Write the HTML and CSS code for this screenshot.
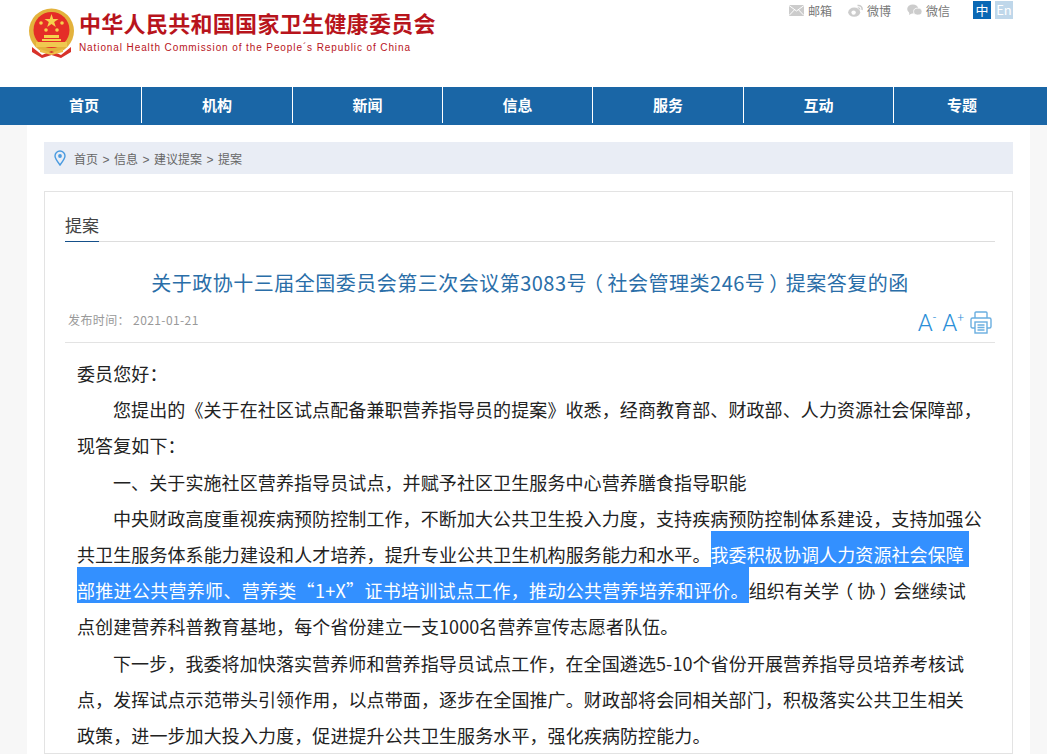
FILE: index.html
```html
<!DOCTYPE html>
<html lang="zh-CN">
<head>
  <title>关于政协十三届全国委员会第三次会议第3083号提案答复的函</title>
  <link rel="stylesheet" href="styles.css">
</head>
<body>
  <!-- Header -->
  <div class="header">
    <div class="logo">
      <svg class="emblem" width="47" height="50" viewBox="0 0 47 50">
        <circle cx="23.5" cy="23" r="22.5" fill="#e3b23c"/>
        <circle cx="23.5" cy="22" r="18" fill="#e52d27"/>
        <polygon points="23.5,6 25.2,11 30.5,11 26.2,14 27.8,19 23.5,16 19.2,19 20.8,14 16.5,11 21.8,11" fill="#f6d04d"/>
        <circle cx="13" cy="15" r="1.8" fill="#f6d04d"/>
        <circle cx="34" cy="15" r="1.8" fill="#f6d04d"/>
        <circle cx="18" cy="22" r="1.8" fill="#f6d04d"/>
        <circle cx="29" cy="22" r="1.8" fill="#f6d04d"/>
        <rect x="16" y="27" width="15" height="3" fill="#f6d04d"/>
        <rect x="14" y="31" width="19" height="2" fill="#f6d04d"/>
        <rect x="8" y="34" width="31" height="5" fill="#f0c850"/>
        <path d="M4 39 L14 47 L23.5 43 L33 47 L43 39 L43 44 L33 50 L23.5 47 L14 50 L4 44 Z" fill="#d8322a"/>
        <path d="M12 41 L23.5 45 L35 41 L35 44 L23.5 47 L12 44 Z" fill="#eec04a"/>
      </svg>
      <div class="logo-text">
        <div class="logo-cn">中华人民共和国国家卫生健康委员会</div>
        <div class="logo-en">National Health Commission of the People´s Republic of China</div>
      </div>
    </div>
    <div class="top-links">
      <a class="top-link">
        <svg width="15" height="11" viewBox="0 0 15 11"><rect width="15" height="11" fill="#ccc"/><path d="M0 0.5 L7.5 6 L15 0.5 M0 10.5 L5.5 4.8 M15 10.5 L9.5 4.8" fill="none" stroke="#fff" stroke-width="1"/></svg>
        邮箱
      </a>
      <a class="top-link">
        <svg width="15" height="13" viewBox="0 0 15 13"><ellipse cx="6.2" cy="8.2" rx="6" ry="4.6" fill="#ccc"/><circle cx="5.6" cy="8.6" r="2.2" fill="#fff"/><path d="M9.5 1.5 C12.5 1 14.6 3 14 6" fill="none" stroke="#ccc" stroke-width="1.5"/><path d="M9.8 3.8 C11 3.6 12 4.4 11.8 5.6" fill="none" stroke="#ccc" stroke-width="1.2"/></svg>
        微博
      </a>
      <a class="top-link">
        <svg width="15" height="12" viewBox="0 0 15 12"><ellipse cx="5.8" cy="5" rx="5.6" ry="4.6" fill="#ccc"/><path d="M2.5 8 L2 11 L5.5 9 Z" fill="#ccc"/><ellipse cx="10.8" cy="7.6" rx="4.2" ry="3.5" fill="#ccc" stroke="#fff" stroke-width="0.8"/></svg>
        微信
      </a>
      <div class="lang">
        <span class="lang-cn">中</span>
        <span class="lang-en">En</span>
      </div>
    </div>
  </div>

  <!-- Nav -->
  <div class="nav">
    <div class="nav-inner">
      <a class="nav-item">首页</a>
      <a class="nav-item">机构</a>
      <a class="nav-item">新闻</a>
      <a class="nav-item">信息</a>
      <a class="nav-item">服务</a>
      <a class="nav-item">互动</a>
      <a class="nav-item">专题</a>
    </div>
  </div>

  <div class="main">
    <div class="breadcrumb">
      <svg width="12" height="16" viewBox="0 0 12 16"><path d="M6 15 C3 11 1 8.5 1 6 A5 5 0 0 1 11 6 C11 8.5 9 11 6 15 Z" fill="none" stroke="#4a9be0" stroke-width="1.4"/><circle cx="6" cy="6" r="1.9" fill="#4a9be0"/></svg>
      <span class="crumbs">首页<i>&gt;</i>信息<i>&gt;</i>建议提案<i>&gt;</i>提案</span>
    </div>

    <div class="card">
      <div class="tab-bar"><span class="tab">提案</span></div>
      <h1 class="title">关于政协十三届全国委员会第三次会议第3083号<span class="paren-l">（</span>社会管理类246号<span class="paren-r">）</span>提案答复的函</h1>
      <div class="meta">
        <span class="date">发布时间： 2021-01-21</span>
        <div class="tools">
          <span class="font-btn">A<sup>-</sup></span>
          <span class="font-btn">A<sup>+</sup></span>
          <svg width="22" height="23" viewBox="0 0 22 23" fill="none" stroke="#6aaee0" stroke-width="1.4"><path d="M5 7 V2 A1 1 0 0 1 6 1 H16 A1 1 0 0 1 17 2 V7"/><path d="M5 17 H2.5 A1.5 1.5 0 0 1 1 15.5 V8.5 A1.5 1.5 0 0 1 2.5 7 H19.5 A1.5 1.5 0 0 1 21 8.5 V15.5 A1.5 1.5 0 0 1 19.5 17 H17"/><rect x="5" y="11" width="12" height="11"/><path d="M7.5 14 H14.5 M7.5 16.5 H14.5 M7.5 19 H14.5"/></svg>
        </div>
      </div>
      <div class="content">
        <p class="no-indent">委员您好：</p>
        <p>您提出的《关于在社区试点配备兼职营养指导员的提案》收悉，经商教育部、财政部、人力资源社会保障部，现答复如下：</p>
        <p>一、关于实施社区营养指导员试点，并赋予社区卫生服务中心营养膳食指导职能</p>
        <p>中央财政高度重视疾病预防控制工作，不断加大公共卫生投入力度，支持疾病预防控制体系建设，支持加强公共卫生服务体系能力建设和人才培养，提升专业公共卫生机构服务能力和水平。<span class="hl hl-first">我委积极协调人力资源社会保障</span><br><span class="hl hl-second">部推进公共营养师、营养类“1+X”证书培训试点工作，推动公共营养培养和评价。</span>组织有关学<span class="paren-l">（</span>协<span class="paren-r">）</span>会继续试点创建营养科普教育基地，每个省份建立一支1000名营养宣传志愿者队伍。</p>
        <p>下一步，我委将加快落实营养师和营养指导员试点工作，在全国遴选5-10个省份开展营养指导员培养考核试点，发挥试点示范带头引领作用，以点带面，逐步在全国推广。财政部将会同相关部门，积极落实公共卫生相关<br>政策，进一步加大投入力度，促进提升公共卫生服务水平，强化疾病防控能力。</p>
      </div>
    </div>
  </div>
</body>
</html>
```

FILE: styles.css
```css
html, body {
  height: 754px;
  overflow: hidden;
}

body {
  margin: 0;
  padding: 0;
  background: #f7f7f7;
  font-family: "Noto Sans CJK SC", "Liberation Sans", sans-serif;
  color: #222;
}

.header {
  height: 87px;
  background: #fff;
  display: flex;
  justify-content: space-between;
  padding: 0 34px 0 28px;
}

.logo {
  display: flex;
  align-items: flex-start;
  gap: 4px;
  padding-top: 8px;
}

.logo-cn {
  font-size: 22px;
  line-height: 30px;
  font-weight: 700;
  letter-spacing: 0.3px;
  margin-top: -1px;
  color: #b8141c;
  white-space: nowrap;
}

.logo-en {
  font-family: "Liberation Sans", sans-serif;
  font-size: 10px;
  line-height: 14px;
  margin-top: 4px;
  letter-spacing: 0.9px;
  color: #b8141c;
  white-space: nowrap;
}

.top-links {
  display: flex;
  align-items: flex-start;
  padding-top: 1px;
}

.top-link {
  display: flex;
  align-items: center;
  gap: 4px;
  height: 18px;
  margin-right: 16px;
  font-size: 12px;
  color: #777;
  white-space: nowrap;
}

.lang {
  display: flex;
  gap: 4px;
  margin-left: 7px;
}

.lang span {
  width: 18px;
  height: 18px;
  line-height: 18px;
  text-align: center;
  font-size: 13px;
  color: #fff;
}

.lang-cn {
  background: #0a68b4;
}

.lang-en {
  background: #bfd7ea;
}

.nav {
  height: 38px;
  background: #1a66a6;
}

.nav-inner {
  display: grid;
  grid-template-columns: 115px 151px 150px 150px 151px 150px 136px;
  margin-left: 27px;
  height: 36px;
}

.nav-item {
  line-height: 35px;
  text-align: center;
  font-size: 15px;
  font-weight: 700;
  color: #fff;
  border-right: 1px solid #fff;
}

.nav-item:last-child {
  border-right: none;
}

.main {
  width: 969px;
  margin-left: 27px;
  padding: 17px 17px 0;
  background: #fff;
}

.breadcrumb {
  height: 32px;
  display: flex;
  align-items: center;
  gap: 8px;
  padding-left: 10px;
  background: #e9edf5;
}

.crumbs {
  font-size: 12px;
  color: #666;
}

.crumbs i {
  margin: 0 4.5px;
  font-style: normal;
  font-family: "Liberation Sans", sans-serif;
}

.card {
  margin-top: 17px;
  padding: 0 17px 0 20px;
  border: 1px solid #e3e3e3;
}

.tab-bar {
  height: 49px;
  border-bottom: 1px solid #ddd;
  display: flex;
  align-items: flex-end;
}

.tab {
  font-size: 17px;
  line-height: 32px;
  height: 32px;
  margin-bottom: -1px;
  color: #444;
  border-bottom: 1px solid #15508a;
}

.title {
  margin: 26px 0 0;
  font-size: 20px;
  line-height: 30px;
  font-weight: 400;
  letter-spacing: 0.5px;
  text-align: center;
  color: #2a6ea8;
}

/* centre the full-width brackets in their cell */
.paren-l {
  margin: 0 4px 0 -4px;
}

.paren-r {
  margin: 0 -4px 0 4px;
}

.meta {
  display: flex;
  justify-content: space-between;
  align-items: center;
  height: 44px;
  padding-left: 3px;
  padding-right: 3px;
  border-bottom: 1px solid #e3e3e3;
}

.date {
  margin-top: -2px;
  font-size: 12px;
  letter-spacing: 0.4px;
  color: #999;
}

.tools {
  display: flex;
  align-items: center;
  gap: 6px;
  margin-top: 5px;
}

.font-btn {
  font-family: Roboto, sans-serif;
  font-weight: 300;
  font-size: 24px;
  line-height: 24px;
  color: #2b8fd8;
}

.font-btn sup {
  font-size: 12px;
  line-height: 0;
}

.content {
  padding: 12px 12px 0;
  font-size: 18px;
  line-height: 36.2px;
  letter-spacing: 0.1px;
}

.content p {
  margin: 0;
  text-indent: 36px;
}

.content .no-indent {
  text-indent: 0;
}

.hl {
  padding: 10px 0 0;
  background: #3390ff;
  color: #fff;
}

.hl-first {
  padding-right: 5px;
}

.hl-second {
  letter-spacing: 0.3px;
}
```
